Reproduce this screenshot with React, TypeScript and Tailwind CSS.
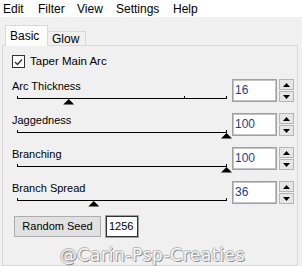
import React from 'react';

const SliderTrack = ({ pos, ticks = [] }: { pos: number; ticks?: number[] }) => {
  const x0 = 5;
  const x1 = 214;
  const cx = x0 + (x1 - x0) * pos;
  return (
    <svg width="222" height="12" className="block overflow-visible">
      <line x1={x0} y1="4.5" x2={x1 + 1} y2="4.5" stroke="#000" strokeWidth="1" />
      <line x1={x0 + 0.5} y1="2" x2={x0 + 0.5} y2="5" stroke="#000" strokeWidth="1" />
      <line x1={x1 + 0.5} y1="2" x2={x1 + 0.5} y2="5" stroke="#000" strokeWidth="1" />
      {ticks.map((t) => (
        <line key={t} x1={t + 0.5} y1="2" x2={t + 0.5} y2="5" stroke="#000" strokeWidth="1" />
      ))}
      <polygon points={`${cx + 0.5},5 ${cx + 6},10.5 ${cx - 5},10.5`} fill="#000" />
    </svg>
  );
};

const Spinner = ({ value }: { value: string }) => (
  <div className="mt-[1px] flex gap-[2px]">
    <div className="h-[23px] w-[45px] border border-[#a0a0a0] bg-white">
      <div className="h-full w-full border border-[#c4c4c4] pl-[1px] text-[12px] leading-[19px] text-[#1a3f8f]">
        {value}
      </div>
    </div>
    <div className="flex h-[23px] w-[15px] flex-col">
      <div className="flex h-[11px] items-center justify-center border border-[#b5b5b5] bg-[#e6e6e6]">
        <svg width="7" height="4"><polygon points="3.5,0 7,4 0,4" fill="#000" /></svg>
      </div>
      <div className="mt-[1px] flex h-[11px] items-center justify-center border border-[#b5b5b5] bg-[#e6e6e6]">
        <svg width="7" height="4"><polygon points="0,0 7,0 3.5,4" fill="#000" /></svg>
      </div>
    </div>
  </div>
);

const rows = [
  { label: 'Arc Thickness', value: '16', pos: 0.245, ticks: [172] },
  { label: 'Jaggedness', value: '100', pos: 1 },
  { label: 'Branching', value: '100', pos: 1 },
  { label: 'Branch Spread', value: '36', pos: 0.365 },
];

export default function App() {
  return (
    <div className="relative flex h-[266px] w-[302px] flex-col overflow-hidden bg-[#f0f0f0] font-['Liberation_Sans',Arial,sans-serif] text-[11px] text-black">
      {/* menu */}
      <div className="flex h-[17px] items-center bg-white pl-[3px] text-[12px]">
        <span className="w-[35px]">Edit</span>
        <span className="w-[39px]">Filter</span>
        <span className="w-[39px]">View</span>
        <span className="w-[57px]">Settings</span>
        <span>Help</span>
      </div>

      {/* tabs */}
      <div className="flex h-[28px] items-end pl-[5px]">
        <div className="relative z-10 -mb-px h-[21px] w-[43px] border border-b-0 border-[#d9d9d9] bg-white pl-[4px] pt-[3px] text-[12px] leading-[14px]">
          Basic
        </div>
        <div className="-ml-px h-[14px] w-[39px] border border-b-0 border-[#d9d9d9] bg-[#f0f0f0] pl-[4px] text-[12px] leading-[14px]">
          Glow
        </div>
      </div>

      {/* panel */}
      <div className="ml-[2px] flex-1 w-[296px] border border-[#d9d9d9] bg-[#f0f0f0] pl-[9px] pt-[9px]">
        <div className="flex h-[13px] items-center gap-[5px]">
          <div className="flex h-[13px] w-[13px] items-center justify-center border border-[#333] bg-white">
            <svg width="9" height="8" viewBox="0 0 9 8">
              <path d="M1 4 L3.5 6.5 L8 1.5" fill="none" stroke="#333" strokeWidth="1.3" />
            </svg>
          </div>
          <span className="text-[11.5px]">Taper Main Arc</span>
        </div>

        <div className="mt-[10px] flex flex-col">
          {rows.map((r) => (
            <div key={r.label} className="flex h-[34px]">
              <div className="flex w-[220px] flex-col">
                <div className="h-[16px] leading-[16px]">{r.label}</div>
                <SliderTrack pos={r.pos} ticks={r.ticks} />
              </div>
              <Spinner value={r.value} />
            </div>
          ))}

          <div className="flex items-start gap-[4px]">
            <button className="ml-[2px] mt-[2px] h-[21px] w-[87px] border border-[#adadad] bg-[#e1e1e1] text-[11px]">
              Random Seed
            </button>
            <div className="mt-[1px] h-[23px] w-[34px] border border-[#a0a0a0] bg-white">
              <div className="h-full w-full border border-[#333] pl-[2px] text-[11px] leading-[19px]">1256</div>
            </div>
          </div>
        </div>
      </div>

      <div className="pointer-events-none absolute left-[60px] top-[245px] font-['DejaVu_Sans',sans-serif] text-[17px] leading-[20px] tracking-[0.6px] text-[#f7f7f7] [text-shadow:1px_1px_0_#8f8f8f,-1px_0_0_#b8b8b8,0_-1px_0_#b8b8b8,0_0_1px_#7a7a7a]">
        @Carin-Psp-Creaties
      </div>
    </div>
  );
}
